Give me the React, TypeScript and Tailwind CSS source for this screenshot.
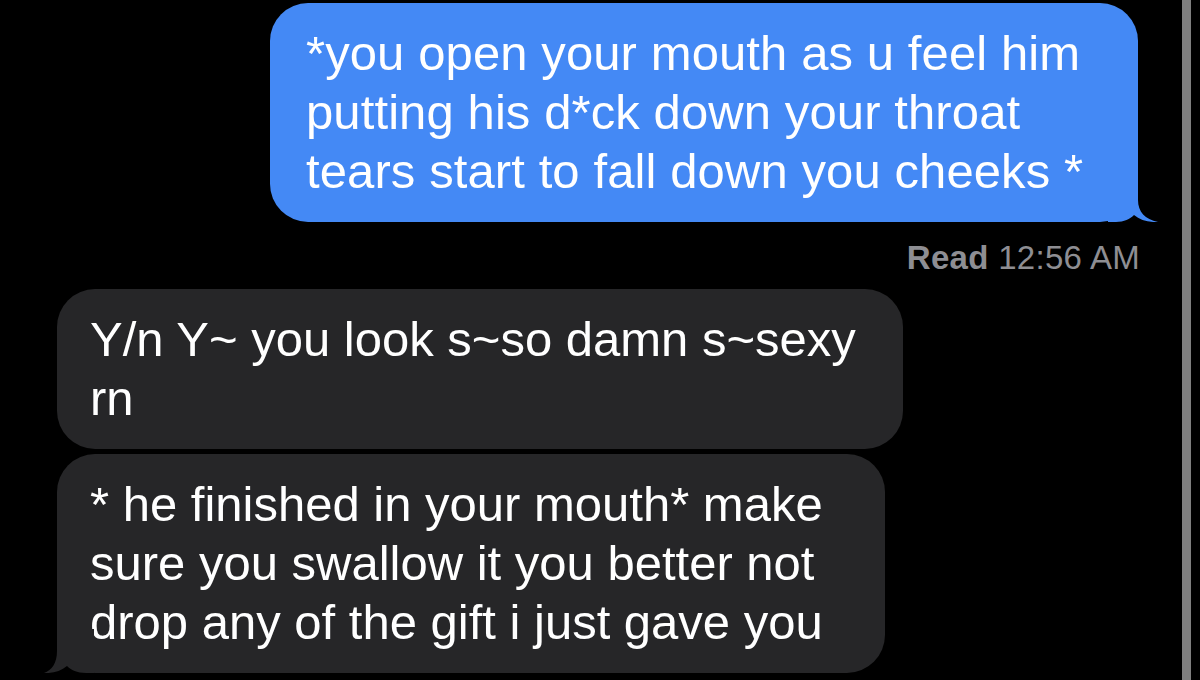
import type { FC } from "react";

const FONT = "font-['Liberation_Sans',Arial,sans-serif]";

const BlueTail: FC = () => (
  <svg
    className="absolute right-[-20px] bottom-0"
    width="50"
    height="44"
    viewBox="0 0 50 44"
  >
    <path
      d="M0,0 H30 V22 C30,34 37,41 50,44 C40,44.5 32,42 26,37 C22,41 16,44 8,44 H0 Z"
      fill="#4489f5"
    />
  </svg>
);

const GrayTail: FC = () => (
  <svg
    className="absolute left-[-13px] bottom-0"
    width="50"
    height="44"
    viewBox="0 0 50 44"
  >
    <path
      d="M50,0 H13 V22 C13,34 8,41 0,44 C9,44.5 17,42 23,37 C27,41 33,44 42,44 H50 Z"
      fill="#262628"
    />
  </svg>
);

interface BubbleProps {
  lines: string[];
  width: string;
}

const GrayBubble: FC<BubbleProps> = ({ lines, width }) => (
  <div className={`relative rounded-[38px] bg-[#262628] ${width}`}>
    <div className="py-[21px] pl-[33px] text-[49px] leading-[59px] text-white tracking-[0px]">
      {lines.map((l) => (
        <div key={l} className="whitespace-nowrap">
          {l}
        </div>
      ))}
    </div>
  </div>
);

export default function App() {
  return (
    <div className={`flex h-[680px] w-[1200px] overflow-hidden bg-black ${FONT}`}>
      <div className="flex w-[1182px] flex-col pt-[3px]">
        {/* outgoing */}
        <div className="relative mr-[44px] self-end w-[868px] rounded-[38px] bg-[#4489f5]">
          <div className="py-[21px] pl-[36px] text-[49px] leading-[59px] text-white tracking-[0.1px]">
            <div className="whitespace-nowrap">*you open your mouth as u feel him</div>
            <div className="whitespace-nowrap">putting his d*ck down your throat</div>
            <div className="whitespace-nowrap">tears start to fall down you cheeks *</div>
          </div>
          <BlueTail />
        </div>
        <div className="mt-[19px] mr-[42px] self-end text-[33px] leading-[34px] text-[#8e8e93] tracking-[0.3px]">
          <span className="font-bold">Read</span> 12:56 AM
        </div>

        {/* incoming */}
        <div className="mt-[14px] ml-[57px] flex flex-col gap-[5px]">
          <GrayBubble
            width="w-[846px]"
            lines={["Y/n Y~ you look s~so damn s~sexy", "rn"]}
          />
          <div className="relative">
            <GrayBubble
              width="w-[828px]"
              lines={[
                "* he finished in your mouth* make",
                "sure you swallow it you better not",
                "drop any of the gift i just gave you",
              ]}
            />
            <GrayTail />
          </div>
        </div>
      </div>
      <div className="w-[9px] bg-[#7f7f7f]" />
    </div>
  );
}
